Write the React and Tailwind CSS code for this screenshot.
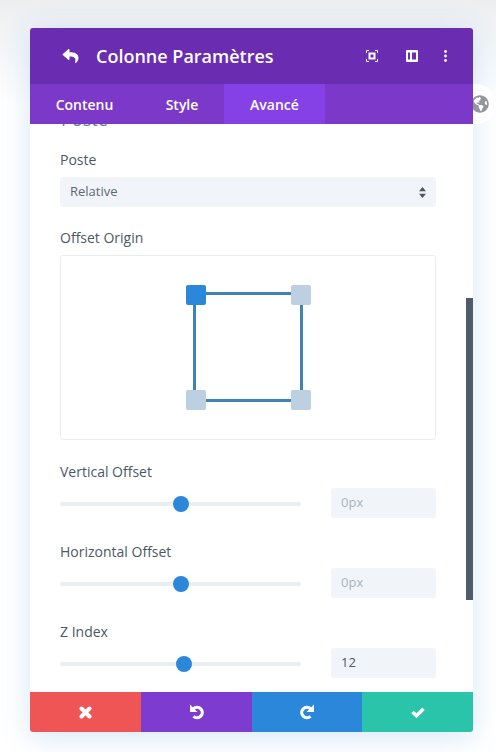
import { FaReply, FaGlobeAmericas } from "react-icons/fa";

function Label({ children }) {
    return <p className="text-[14px] leading-5 text-[#4c5866]">{children}</p>;
}

function SliderRow({ label, value, pos, muted }) {
    return (
        <div className="h-[80px]">
            <Label>{label}</Label>
            <div className="mt-[6px] flex items-center justify-between">
                <div className="relative mt-[2px] h-[4px] w-[241px] rounded-full bg-[#e8eef2]">
                    <span
                        className="absolute top-1/2 h-[16px] w-[16px] -translate-x-1/2 -translate-y-1/2 rounded-full bg-[#2b87da]"
                        style={{ left: pos }}
                    />
                </div>
                <div className={`flex h-[30px] w-[105px] items-center rounded-[3px] bg-[#f1f5f9] px-[10px] text-[13px] font-medium ${muted ? "text-[#a9b3c1]" : "text-[#4c5866]"}`}>
                    {value}
                </div>
            </div>
        </div>
    );
}

export default function App() {
    return (
        <div className="h-[752px] w-[496px] overflow-hidden bg-[linear-gradient(180deg,#eceef0_0%,#f6f8fa_8%,#ffffff_14%)] pt-[3px] font-['Open_Sans',sans-serif]">
            <div className="relative mx-[30px] mt-[25px] flex h-[704px] w-[443px] flex-col rounded-[3px] bg-white shadow-[0_5px_30px_rgba(43,135,218,0.2)]">
                {/* Header */}
                <div className="flex h-[56px] shrink-0 items-center rounded-t-[3px] bg-[#6a2cb0] pl-[32px] pr-[26px] text-white">
                    <FaReply className="h-[16px] w-[17px]" />
                    <h1 className="ml-[17px] text-[18px] font-semibold">Colonne Paramètres</h1>
                    <div className="ml-auto flex items-center">
                        <svg width="12" height="12" viewBox="0 0 12 12" fill="none" stroke="white" strokeWidth="1">
                            <path d="M.5 3V.5H3M9 .5h2.500V3M11.500 9v2.500H9M3 11.500H.5V9" />
                            <rect x="3.500" y="3.500" width="5" height="5" strokeWidth="2" />
                        </svg>
                        <svg className="ml-[28px]" width="12" height="12" viewBox="0 0 12 12">
                            <rect width="12" height="12" rx="1" fill="white" />
                            <rect x="2" y="2.500" width="2" height="7" fill="#6a2cb0" />
                            <rect x="6" y="2.500" width="4" height="7" fill="#6a2cb0" />
                        </svg>
                        <svg className="ml-[26px]" width="3" height="12" viewBox="0 0 3 12" fill="white">
                            <circle cx="1.500" cy="1.500" r="1.400" />
                            <circle cx="1.500" cy="6" r="1.400" />
                            <circle cx="1.500" cy="10.500" r="1.400" />
                        </svg>
                    </div>
                </div>

                {/* Tabs */}
                <div className="relative z-10 flex h-[40px] shrink-0 bg-[#7b38c9] text-[14px] font-semibold text-white">
                    <div className="flex w-[110px] items-center justify-center pr-[1px]">Contenu</div>
                    <div className="flex w-[84px] items-center justify-center">Style</div>
                    <div className="flex w-[101px] items-center justify-center bg-[#8540e6]">Avancé</div>
                </div>

                {/* Options */}
                <div className="relative flex-1 overflow-hidden px-[30px]">
                    <div className="-mt-[17px] flex h-[24px] w-[376px] items-center justify-between text-[18px] font-medium text-[#5d7fa8]">
                        <span className="pl-[1px]">Poste</span>
                        <svg className="mr-[-15px]" width="10" height="6" viewBox="0 0 10 6" fill="none" stroke="#5d7fa8" strokeWidth="2">
                            <path d="M1 5l4-4 4 4" />
                        </svg>
                    </div>

                    <div className="mt-[19px]">
                        <Label>Poste</Label>
                        <div className="mt-[7px] flex h-[30px] w-[376px] items-center justify-between rounded-[3px] bg-[#f1f5f9] pl-[10px] pr-[10px] text-[13px] font-medium text-[#5c6878]">
                            Relative
                            <svg width="7" height="11" viewBox="0 0 7 11" fill="#4c5866">
                                <path d="M3.500 0L7 4.300H0zM3.500 11L0 6.700h7z" />
                            </svg>
                        </div>
                    </div>

                    <div className="mt-[21px]">
                        <Label>Offset Origin</Label>
                        <div className="mt-[7px] flex h-[185px] w-[376px] items-center justify-center rounded-[3px] border border-[#e9edf1]">
                            <svg className="ml-[1px]" width="125" height="125" viewBox="0 0 125 125">
                                <rect x="8.500" y="8.500" width="107" height="107" fill="none" stroke="#3f83b5" strokeWidth="3" />
                                <rect x="0" y="0" width="20" height="20" rx="2" fill="#2b87da" />
                                <rect x="105" y="0" width="20" height="20" rx="2" fill="#bdd0e1" />
                                <rect x="0" y="105" width="20" height="20" rx="2" fill="#bdd0e1" />
                                <rect x="105" y="105" width="20" height="20" rx="2" fill="#bdd0e1" />
                            </svg>
                        </div>
                    </div>

                    <div className="mt-[22px] w-[376px]">
                        <SliderRow label="Vertical Offset" value="0px" pos={120.5} muted />
                        <SliderRow label="Horizontal Offset" value="0px" pos={120.5} muted />
                        <SliderRow label="Z Index" value="12" pos={123.5} />
                    </div>

                    {/* Scrollbar */}
                    <div className="absolute right-0 top-[174px] h-[302px] w-[7px] bg-[#4f5b6b]" />
                </div>

                {/* Footer */}
                <div className="grid h-[40px] shrink-0 grid-cols-[111px_111px_110px_111px] overflow-hidden rounded-b-[3px] text-white">
                    <div className="flex items-center justify-center bg-[#ef5555]">
                        <svg width="13" height="13" viewBox="0 0 13 13" fill="none" stroke="white" strokeWidth="4" strokeLinecap="round">
                            <path d="M2.500 2.500l8 8M10.500 2.500l-8 8" />
                        </svg>
                    </div>
                    <div className="flex items-center justify-center bg-[#7e3bd0]">
                        <svg width="16" height="16" viewBox="0 0 16 16" fill="none">
                            <path d="M4.500 4.700A5.200 5.200 0 1 1 4.500 12.300" stroke="white" strokeWidth="3.200" />
                            <path d="M1 .5V8h7.500z" fill="white" />
                        </svg>
                    </div>
                    <div className="flex items-center justify-center bg-[#2b87da]">
                        <svg width="16" height="16" viewBox="0 0 16 16" fill="none">
                            <path d="M11.500 4.700A5.200 5.200 0 1 0 11.500 12.300" stroke="white" strokeWidth="3.200" />
                            <path d="M15 .5V8H7.500z" fill="white" />
                        </svg>
                    </div>
                    <div className="flex items-center justify-center bg-[#29c4a9]">
                        <svg width="14" height="11" viewBox="0 0 14 11" fill="none" stroke="white" strokeWidth="3.500">
                            <path d="M1.500 5l4 3.800 7-7" />
                        </svg>
                    </div>
                </div>

                {/* Globe button */}
                <div className="absolute left-[426px] top-[56px] flex h-[40px] w-[40px] items-center justify-end rounded-full bg-white pr-[7px]">
                    <FaGlobeAmericas className="h-[18px] w-[18px] text-[#92979e]" />
                </div>
            </div>
        </div>
    );
}
